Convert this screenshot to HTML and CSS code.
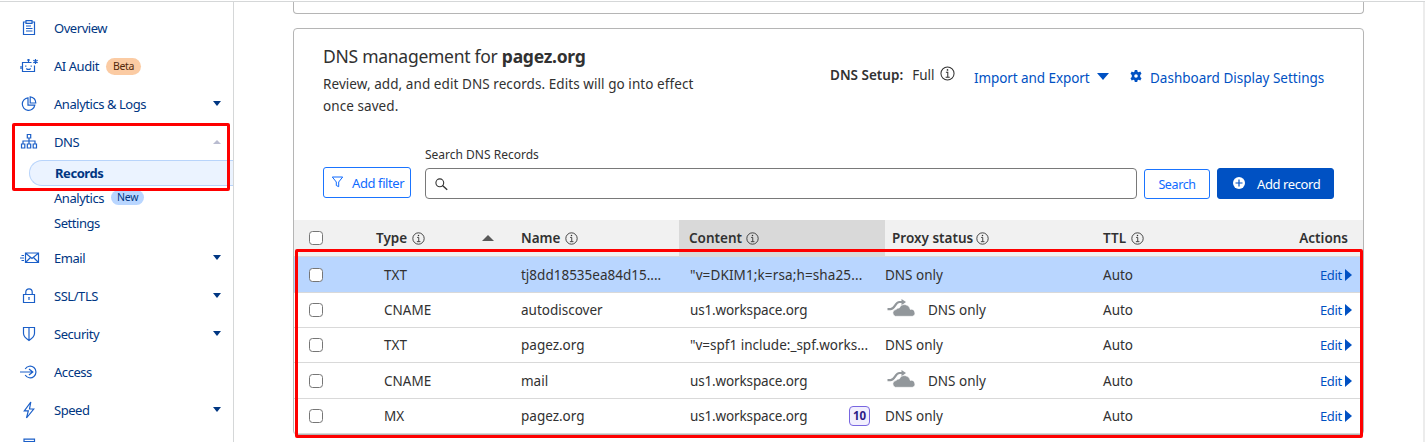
FILE: index.html
```html
<!DOCTYPE html>
<html lang="en">
<head>
<meta charset="utf-8">
<title>DNS Records</title>
<link rel="stylesheet" href="styles.css">
</head>
<body>
<svg width="0" height="0" class="defs">
  <symbol id="info" viewBox="0 0 16 16"><circle cx="8" cy="8" r="7" fill="none" stroke="currentColor" stroke-width="1.1"/><path d="M6.3 6.7h2v5M6 11.9h4.4" fill="none" stroke="currentColor" stroke-width="1.1"/><circle cx="8" cy="4.2" r=".9" fill="currentColor"/></symbol>
  <symbol id="cloud" viewBox="0 0 29 18"><path d="M.5 10.200h3c4.500 0 4.500-7.200 9-7.200h3.500" fill="none" stroke="#92979b" stroke-width="2.200"/><path d="M14.500 0l4.500 3-4.500 3.200z" fill="#92979b"/><path d="M8.300 17.300a3.500 3.500 0 0 1 .7-6.800 3.500 3.500 0 0 1 3.300-1.500A5.800 5.800 0 0 1 23.300 10.500a3.500 3.500 0 0 1 2 6.800z" fill="#92979b" stroke="#fff" stroke-width=".6"/></symbol>
</svg>
<div class="app">
  <nav class="side">
    <a class="item"><svg class="ico" viewBox="0 0 18 18"><path d="M5.500 3h-2v12.500h11V3h-2M6 1.700h6v2.600H6zM6 7h5M6 9.500h6.500M6 12h6.500"/></svg><span>Overview</span></a>
    <a class="item"><svg class="ico" viewBox="0 0 18 18"><path d="M8.500 2v3.500M7 3h3M11.500 5.500h-9v9h12V8.500M5.800 8.500v1.300M11.200 8.500v1.300M6.300 11.500l1 .8h2.400l1-.8M1 9v3M15.500 2v5M13.300 3.200l4.400 2.500M17.700 3.200l-4.400 2.500"/></svg><span>AI Audit</span><b class="tag beta">Beta</b></a>
    <a class="item"><svg class="ico" viewBox="0 0 18 18"><path d="M8 2.800a6.300 6.300 0 1 0 6.800 7.400H8zM10.200 1.800V8h5.600A6 6 0 0 0 10.200 1.800z"/></svg><span>Analytics &amp; Logs</span><i class="caret"></i></a>
    <a class="item"><svg class="ico" viewBox="0 0 18 18"><path d="M7.300 1.500h3.400v3.500H7.300zM9 5v6M3 11V8h12v3M1.500 11h3.300v4H1.500zM7.300 11h3.400v4H7.300zM13.200 11h3.300v4h-3.300z"/></svg><span>DNS</span><i class="caret up"></i></a>
    <a class="sub active"><span>Records</span></a>
    <a class="sub"><span>Analytics</span><b class="tag new">New</b></a>
    <a class="sub last"><span>Settings</span></a>
    <a class="item"><svg class="ico wide" viewBox="0 0 20 18"><path d="M5.500 4h13v9.500h-13zM6 4.500l6 5 6-5M6 13l4.500-4.500M18 13l-4.500-4.500M1.500 6.500H4M0 9h4M1.500 11.500H4"/></svg><span>Email</span><i class="caret"></i></a>
    <a class="item"><svg class="ico" viewBox="0 0 18 18"><path d="M3.500 7.500h11v8h-11zM5.800 7.500V5a3.200 3.200 0 0 1 6.400 0v2.500M9 10v3M8.300 10.500h1.400"/></svg><span>SSL/TLS</span><i class="caret"></i></a>
    <a class="item"><svg class="ico" viewBox="0 0 18 18"><path d="M3.500 2.500h11v6c0 3-2.500 5-5.500 7-3-2-5.500-4-5.500-7zM9 2.500v12.500"/></svg><span>Security</span><i class="caret"></i></a>
    <a class="item"><svg class="ico wide" viewBox="0 0 20 18"><path d="M5.200 6a5.800 5.800 0 1 1 0 6M0 9h12.500M9 6l3.800 3L9 12"/></svg><span>Access</span></a>
    <a class="item"><svg class="ico" viewBox="0 0 18 18"><path d="M10.800 1L4.300 9.800h4L6.500 17l7.200-9H9.500z"/></svg><span>Speed</span><i class="caret"></i></a>
    <a class="item next"><svg class="ico" viewBox="0 0 18 18"><path d="M4 2.200h10.500v13H4zM4 4.500h10.500"/></svg></a>
  </nav>
  <main class="main">
    <section class="prev"></section>
    <section class="card">
      <header class="head">
        <div class="intro">
          <h1>DNS management for <b>pagez.org</b></h1>
          <p>Review, add, and edit DNS records. Edits will go into effect<br>once saved.</p>
        </div>
        <div class="setup"><b>DNS Setup:</b><span>Full</span><svg class="info"><use href="#info"/></svg></div>
        <a class="link imp"><span>Import and Export</span><i></i></a>
        <a class="link dash"><svg viewBox="0 0 12 12"><path fill="#0051c3" fill-rule="evenodd" d="M4.800 0h2.400l.4 1.800 1 .5 1.700-.7 1.200 2.100L10.200 5v2l1.300 1.300-1.200 2.100-1.700-.7-1 .5L7.200 12H4.800l-.4-1.800-1-.5-1.700.7L.5 8.300 1.800 7V5L.5 3.700l1.200-2.100 1.700.7 1-.5zM6 4.200a1.800 1.800 0 1 0 0 3.600 1.800 1.800 0 0 0 0-3.600z"/></svg><span>Dashboard Display Settings</span></a>
      </header>
      <div class="tools">
        <button class="btn filter"><svg viewBox="0 0 12 12"><path d="M.8 1h10.400L7.200 6v4.700L4.800 9.500V6z" fill="none" stroke="currentColor"/></svg><span>Add filter</span></button>
        <label class="search"><span>Search DNS Records</span><div class="field"><svg viewBox="0 0 13 13"><circle cx="4.800" cy="4.800" r="3.900" fill="none" stroke="#333" stroke-width="1.100"/><path d="M7.500 7.500l4.700 4.200" stroke="#333" stroke-width="1.400"/></svg></div></label>
        <button class="btn find">Search</button>
        <button class="btn add"><svg viewBox="0 0 12 12"><circle cx="6" cy="6" r="6" fill="#fff"/><path d="M6 2.500v7M2.500 6h7" stroke="#0051c3" stroke-width="1.200"/></svg><span>Add record</span></button>
      </div>
      <div class="table">
        <div class="row th">
          <div class="chk"><i></i></div>
          <div class="type"><b>Type</b><svg class="info"><use href="#info"/></svg><i class="sort"></i></div>
          <div class="name"><b>Name</b><svg class="info"><use href="#info"/></svg></div>
          <div class="content"><b>Content</b><svg class="info"><use href="#info"/></svg></div>
          <div class="proxy"><b>Proxy status</b><svg class="info"><use href="#info"/></svg></div>
          <div class="ttl"><b>TTL</b><svg class="info"><use href="#info"/></svg></div>
          <div class="act"><b>Actions</b></div>
        </div>
        <div class="row sel tall"><div class="chk"><i></i></div><div class="type">TXT</div><div class="name">tj8dd18535ea84d15....</div><div class="content key">"v=DKIM1;k=rsa;h=sha25...</div><div class="proxy">DNS only</div><div class="ttl">Auto</div><div class="act"><a>Edit</a><i></i></div></div>
        <div class="row"><div class="chk"><i></i></div><div class="type">CNAME</div><div class="name">autodiscover</div><div class="content host">us1.workspace.org</div><div class="proxy"><svg class="cloud"><use href="#cloud"/></svg>DNS only</div><div class="ttl">Auto</div><div class="act"><a>Edit</a><i></i></div></div>
        <div class="row"><div class="chk"><i></i></div><div class="type">TXT</div><div class="name">pagez.org</div><div class="content">"v=spf1 include:_spf.works...</div><div class="proxy">DNS only</div><div class="ttl">Auto</div><div class="act"><a>Edit</a><i></i></div></div>
        <div class="row tall"><div class="chk"><i></i></div><div class="type">CNAME</div><div class="name">mail</div><div class="content host">us1.workspace.org</div><div class="proxy"><svg class="cloud"><use href="#cloud"/></svg>DNS only</div><div class="ttl">Auto</div><div class="act"><a>Edit</a><i></i></div></div>
        <div class="row"><div class="chk"><i></i></div><div class="type">MX</div><div class="name">pagez.org</div><div class="content host">us1.workspace.org<em>10</em></div><div class="proxy">DNS only</div><div class="ttl">Auto</div><div class="act"><a>Edit</a><i></i></div></div>
      </div>
    </section>
  </main>
  <div class="edge"></div>
</div>
<div class="mark mark-nav"></div>
<div class="mark mark-table"></div>
</body>
</html>
```

FILE: styles.css
```css
* { box-sizing: border-box; }
body { margin: 0; height: 442px; overflow: hidden; background: #fff; color: #313131; font: 13.5px/20px "Noto Sans", "Open Sans", sans-serif; position: relative; }
.defs { position: absolute; }
.app { display: flex; height: 441px; margin-top: 1px; border-top: 1px solid #d5d7d8; overflow: hidden; }
.side { flex: none; width: 234px; padding-top: 7px; border-right: 1px solid #d5d7d8; color: #003682; font-size: 13px; letter-spacing: -.45px; }
.item { display: flex; align-items: center; height: 38px; padding: 0 12px 0 20px; }
.item span { margin-left: 16px; }
.item.next { height: 32px; align-items: flex-start; padding-top: 8px; }
.ico { flex: none; width: 18px; height: 18px; fill: none; stroke: #1b5fc8; stroke-width: 1.2; }
.ico.wide { width: 20px; margin-right: -2px; }
.caret { margin: -1px 0 0 auto; border: solid transparent; border-width: 5px 4px 0; border-top-color: #003682; }
.caret.up { border-width: 0 4px 4px; border-bottom-color: #b9bcd0; }
.sub { display: flex; align-items: center; height: 25px; padding-left: 54px; }
.sub.active { height: 26px; margin: -1px 0 -1px 29px; padding-left: 25px; border: 1px solid #b8d4fb; border-right: 0; border-radius: 13px 0 0 13px; background: #ebf3ff; font-weight: 700; }
.sub.last { margin-bottom: 4px; }
.tag { height: 17px; border-radius: 9px; font: 400 10.5px/17px "Noto Sans", sans-serif; letter-spacing: -.3px; }
.beta { margin-left: 7px; padding: 0 7px; background: #fbcba3; color: #52280c; }
.new { margin-left: 7px; padding: 0 6px; height: 15px; line-height: 15px; background: #b9d6ff; color: #003682; }
.main { flex: none; width: 1130px; padding-left: 59px; }
.prev { height: 12px; border: 1px solid #b5b5b5; border-top: 0; border-radius: 0 0 4px 4px; }
.card { height: 407px; margin-top: 14px; border: 1px solid #b5b5b5; border-radius: 4px; }
.edge { margin-left: auto; width: 2px; background: #ececec; }
.head { display: flex; height: 126px; padding: 15px 0 0 29px; }
.intro { width: 507px; }
h1 { margin: 0; font-size: 17.5px; line-height: 24px; font-weight: 400; letter-spacing: -.27px; }
p { margin: 5px 0 0; line-height: 22px; letter-spacing: .07px; }
.setup { display: flex; width: 144px; margin-top: 21px; }
.setup b { font-weight: 600; margin-right: 9px; }
.info { width: 13px; height: 13px; }
.setup .info { width: 15px; height: 15px; margin: 1px 0 0 6px; }
.link { display: flex; align-items: center; height: 20px; margin-top: 24px; color: #0051c3; }
.imp { width: 156px; letter-spacing: -.08px; }
.imp i { margin: -3px 0 0 7px; border: solid transparent; border-width: 7px 6px 0; border-top-color: #0051c3; }
.dash svg { width: 12px; height: 12px; margin: -4px 8px 0 0; }
.tools { display: flex; align-items: flex-end; height: 44px; padding-left: 29px; }
.btn { display: flex; align-items: center; height: 31px; padding: 0; border: 1px solid #1a74ff; border-radius: 3px; background: #fff; color: #0f6bff; font: 13px/20px "Noto Sans", sans-serif; letter-spacing: -.4px; }
.filter { width: 88px; padding: 1px 0 0 7px; margin-bottom: 1px; }
.filter svg { width: 13px; height: 12px; margin: -2px 8px 0 0; }
.search { width: 712px; margin-left: 14px; }
.search > span { display: block; margin-bottom: 3px; font-size: 12px; }
.field { display: flex; align-items: center; height: 31px; padding: 2px 0 0 9px; border: 1px solid #797979; border-radius: 4px; }
.field svg { width: 13px; height: 13px; }
.find { width: 66px; height: 30px; margin-left: 7px; padding-top: 1px; justify-content: center; font-size: 12.5px; }
.add { width: 117px; margin-left: 7px; padding: 1px 0 0 15px; background: #0051c3; border-color: #0051c3; color: #fff; }
.add svg { width: 12px; height: 12px; margin: -2px 12px 0 0; }
.table { margin-top: 21px; }
.row { display: grid; grid-template-columns: 82px 145px 158px 206px 218px 1fr 100px; height: 35px; border-bottom: 1px solid #d9d9d9; }
.tall { height: 36px; }
.row > div { display: flex; align-items: center; white-space: nowrap; }
.sel { background: #b9d6ff; }
.chk { padding-left: 15px; }
.chk i { width: 14px; height: 14px; border: 1px solid #767676; border-radius: 3.5px; background: #fff; }
.type { padding-left: 8px; }
.content { padding-left: 11px; }
.key { letter-spacing: .12px; }
.host { letter-spacing: -.14px; }
.content em { margin: 0 15px 0 auto; width: 21px; height: 20px; border: 1px solid #7866e0; border-radius: 4px; background: #f2effe; color: #2c1a86; font: 700 11.5px/18px "Noto Sans", sans-serif; text-align: center; }
.cloud { width: 29px; height: 18px; margin: -4px 12px 0 2px; }
.act { justify-content: flex-end; padding-right: 11px; color: #0051c3; font-size: 13px; letter-spacing: -.3px; }
.act i { margin-left: 3px; border: solid transparent; border-width: 6px 0 6px 7px; border-left-color: #0051c3; }
.th { height: 37px; background: #f1f1f1; }
.th b { font-weight: 600; }
.th .info { margin-left: 5px; }
.th .proxy .info { margin-left: 3px; }
.th .type { padding-left: 0; }
.th .content { padding-left: 10px; background: #d9d9d9; }
.th .content .info { margin-left: 4px; }
.th .proxy { padding-left: 7px; }
.th .act { padding-right: 15px; color: #313131; font-size: 13.5px; letter-spacing: 0; }
.sort { margin: 0 27px 0 auto; border: solid transparent; border-width: 0 6px 6px; border-bottom-color: #595959; }
.mark { position: absolute; border: 3px solid #fe0000; border-radius: 2px; }
.mark-nav { left: 12px; top: 123px; width: 218px; height: 68px; }
.mark-table { left: 295px; top: 249px; width: 1068px; height: 189px; }
```
